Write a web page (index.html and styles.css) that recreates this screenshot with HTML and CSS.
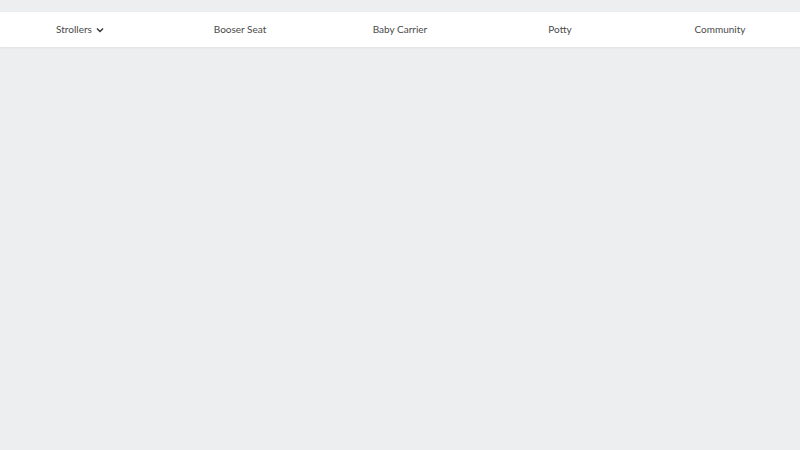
FILE: index.html
```html
<!DOCTYPE html>
<html>
<head>
<meta charset="utf-8">
<link rel="stylesheet" href="styles.css">
</head>
<body>
<nav class="nav">
  <a class="nav-item">Strollers <svg class="chev" width="8" height="6" viewBox="0 0 8 6"><path d="M1 1.5 L4 4.5 L7 1.5" fill="none" stroke="#333" stroke-width="1.4"/></svg></a>
  <a class="nav-item">Booser Seat</a>
  <a class="nav-item">Baby Carrier</a>
  <a class="nav-item">Potty</a>
  <a class="nav-item">Community</a>
</nav>
</body>
</html>
```
FILE: styles.css
```css
html, body { margin: 0; padding: 0; }
body {
  background: #edeef0;
  width: 800px;
  height: 450px;
  padding-top: 12px;
  box-sizing: border-box;
  font-family: "Lato", "Open Sans", sans-serif;
}
.nav {
  display: grid;
  grid-template-columns: repeat(5, 1fr);
  height: 35px;
  background: #fff;
  box-shadow: 0 1px 2px rgba(0,0,0,0.06);
}
.nav-item {
  display: flex;
  align-items: center;
  justify-content: center;
  gap: 4px;
  font-size: 10px;
  color: #4a4a4a;
  padding-bottom: 1px;
}
.chev { margin-top: 2px; }
```
